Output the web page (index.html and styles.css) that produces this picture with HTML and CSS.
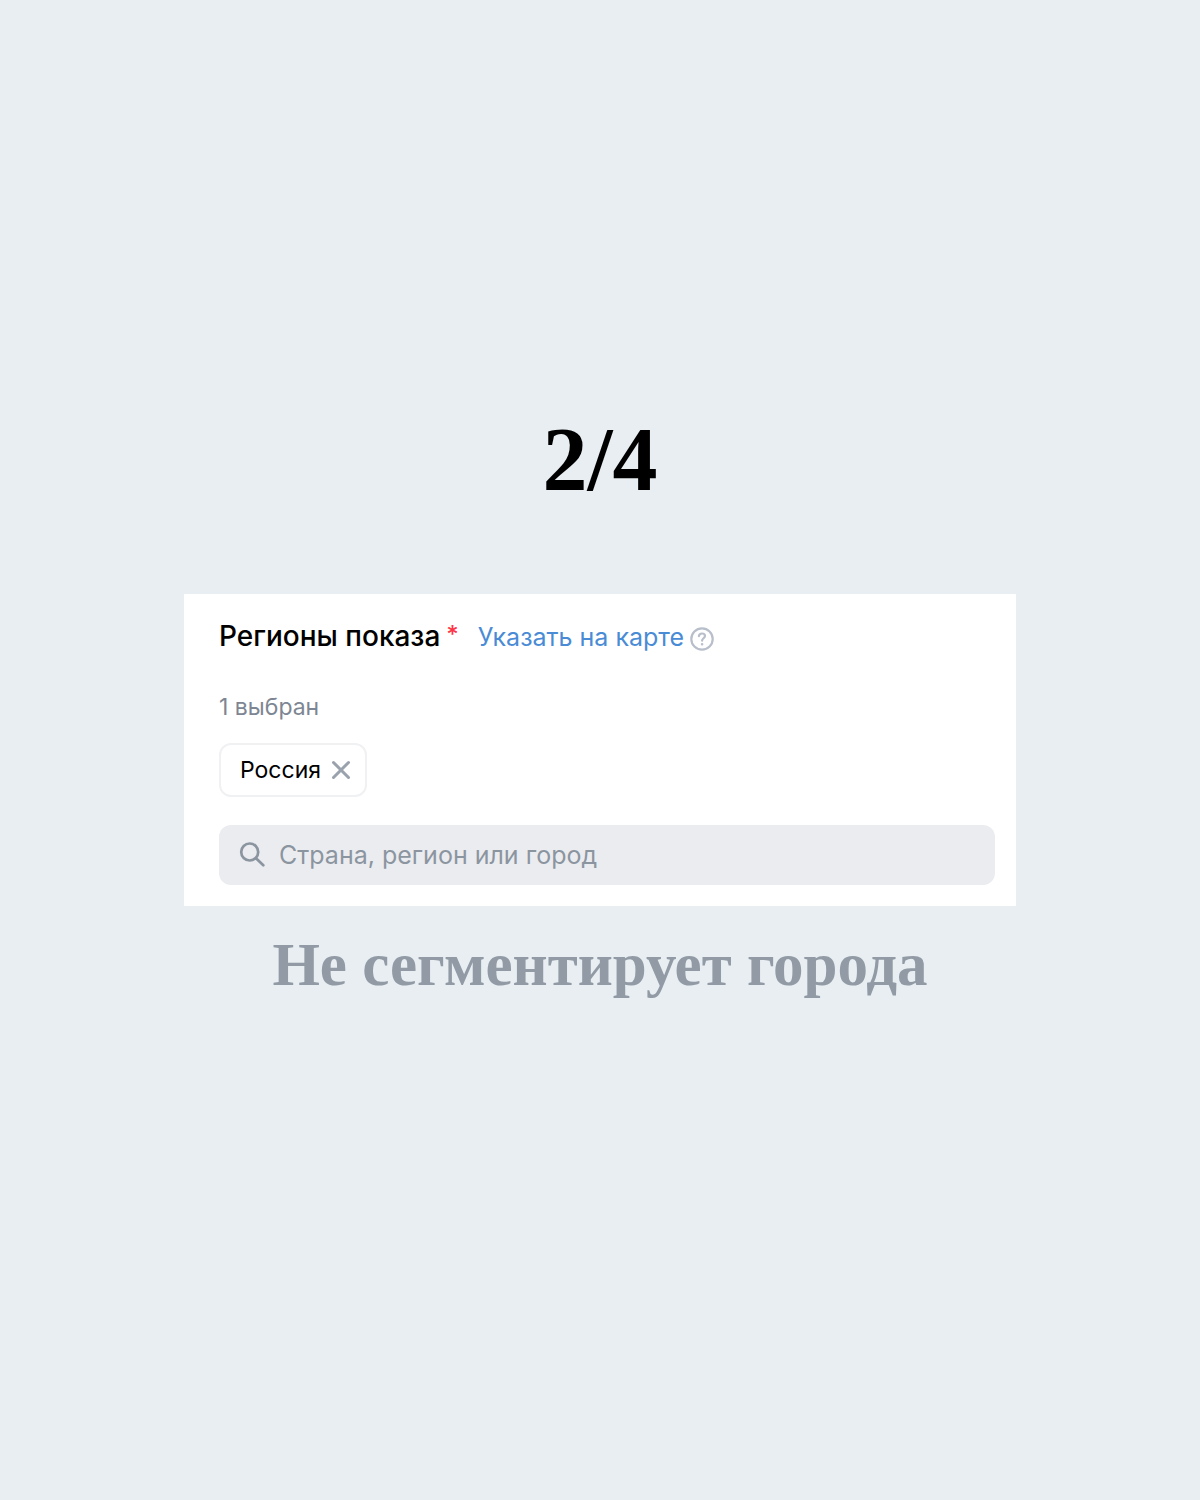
FILE: index.html
```html
<!DOCTYPE html>
<html lang="ru">
<head>
<meta charset="utf-8">
<meta name="viewport" content="width=device-width, initial-scale=1">
<title>Регионы показа</title>
<link rel="stylesheet" href="styles.css">
</head>
<body>
<main class="slide">
  <h1 class="counter">2/4</h1>
  <section class="card">
    <div class="heading">
      <label class="title" for="region">Регионы показа</label>
      <span class="required">*</span>
      <div class="map">
        <a class="map-link" href="#map">Указать на карте</a>
        <button class="icon-button help" type="button" aria-label="Справка">
          <svg width="24" height="24" viewBox="0 0 24 24" fill="none" stroke="currentColor" stroke-width="2.2" stroke-linecap="round" stroke-linejoin="round"><circle cx="12" cy="12" r="10.7"/><path d="M8.9 9.2c.2-1.8 1.4-2.7 3.1-2.7s3 1 3 2.500c0 2.200-2.900 2.300-2.900 4.700"/><circle cx="12.1" cy="17.200" r=".6" fill="currentColor" stroke-width="1.4"/></svg>
        </button>
      </div>
    </div>
    <p class="count">1 выбран</p>
    <div class="chip">
      <span>Россия</span>
      <button class="icon-button remove" type="button" aria-label="Удалить">
        <svg width="20" height="20" viewBox="0 0 20 20" fill="none" stroke="currentColor" stroke-width="3" stroke-linecap="round"><path d="M2.5 2.5l15 15M17.5 2.5l-15 15"/></svg>
      </button>
    </div>
    <div class="search">
      <svg width="26" height="26" viewBox="0 0 26 26" fill="none" stroke="currentColor" stroke-width="2.7" stroke-linecap="round"><circle cx="10.7" cy="10" r="8.5"/><path d="M17 16.200l7.300 7"/></svg>
      <input id="region" class="search-input" type="text" placeholder="Страна, регион или город">
    </div>
  </section>
  <p class="caption">Не сегментирует города</p>
</main>
</body>
</html>
```
FILE: styles.css
```css
* {
  box-sizing: border-box;
}

body {
  margin: 0;
  background: #e8eef2;
  color: #000;
  font-family: Inter, "Liberation Sans", sans-serif;
}

.slide {
  display: flex;
  flex-direction: column;
  align-items: center;
  padding: 410px 184px 80px;
}

.counter {
  margin: 0 0 84px;
  font: bold 90px/100px "Liberation Serif", serif;
}

.card {
  width: 100%;
  padding: 24px 21px 21px 35px;
  background: #fff;
}

.heading {
  display: flex;
  height: 38px;
}

.title {
  font-size: 28px;
  font-weight: 500;
  line-height: 36px;
}

.required {
  margin: 0 19px 0 6px;
  color: #ff3347;
  font-size: 24px;
  font-weight: 500;
  line-height: 34px;
}

.map {
  display: flex;
  align-items: center;
  gap: 6px;
}

.map-link {
  color: #4a8bd6;
  font-size: 25px;
  line-height: 36px;
  text-decoration: none;
}

.icon-button {
  display: flex;
  padding: 0;
  border: 0;
  background: none;
}

.help {
  padding-top: 3px;
  color: #b8bfca;
}

.count {
  margin: 35px 0 20px;
  color: #7d8692;
  font-size: 23px;
  line-height: 32px;
}

.chip {
  display: flex;
  align-items: center;
  gap: 10px;
  width: fit-content;
  height: 54px;
  padding: 0 14px 0 19px;
  border: 2px solid #f0f1f3;
  border-radius: 12px;
  font-size: 23px;
}

.remove {
  color: #99a2ad;
}

.search {
  display: flex;
  align-items: center;
  gap: 14px;
  height: 60px;
  margin-top: 28px;
  padding: 0 20px;
  border-radius: 12px;
  background: #ebecf0;
  color: #8b95a0;
}

.search-input {
  flex: 1;
  min-width: 0;
  padding: 0;
  border: 0;
  outline: 0;
  background: none;
  font: 25px/36px Inter, "Liberation Sans", sans-serif;
}

.search-input::placeholder {
  color: #8b95a0;
  opacity: 1;
}

.caption {
  margin: 23px 0 0;
  color: #929ba5;
  font: bold 61px/72px "Liberation Serif", serif;
  text-align: center;
}
```
